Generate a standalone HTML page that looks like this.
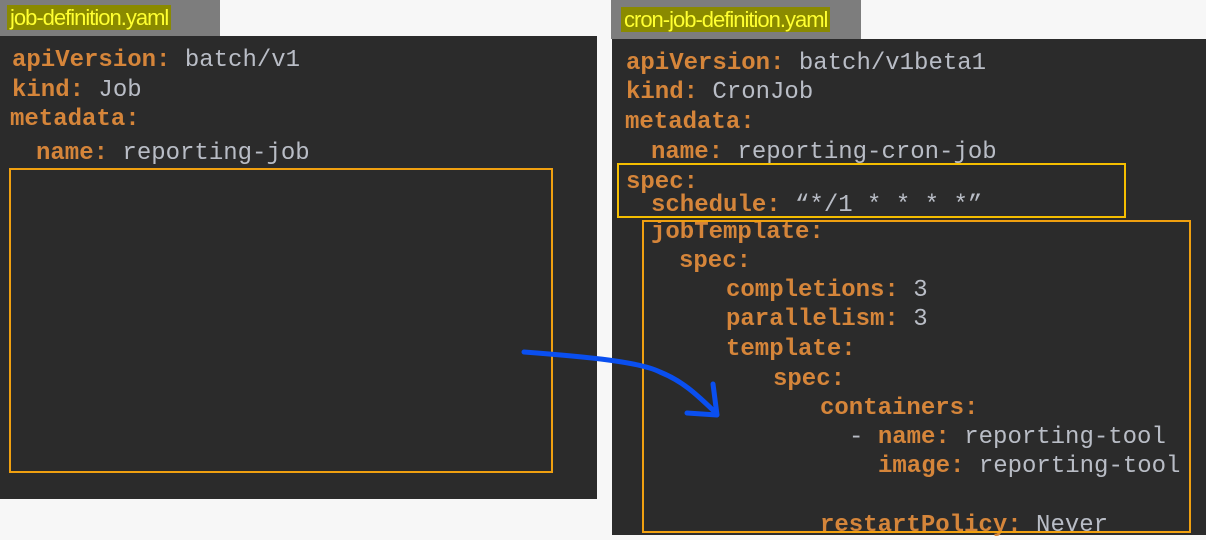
<!DOCTYPE html>
<html><head><meta charset="utf-8"><style>
body{margin:0;width:1206px;height:535px;background:#f7f7f7;position:relative;overflow:hidden;font-family:"Liberation Mono",monospace;font-size:24px}
.p{position:absolute;background:#2b2b2b}
.tab{position:absolute;background:#7d7d7d;font-family:"Liberation Sans",sans-serif;font-size:22px;color:#f4f400}
.tab span{background:#8a8a00;padding:0 3px;color:#ffff30;letter-spacing:-1px}
.l{position:absolute;white-space:pre;line-height:28px;color:#b9bdc6}
.k{color:#d5853a;font-weight:bold}
.box{position:absolute;box-sizing:border-box}
</style></head><body>
<div class="tab" style="left:0;top:0;width:220px;height:36px;line-height:36px"><span style="margin-left:7px">job-definition.yaml</span></div>
<div class="p" style="left:0;top:36px;width:597px;height:463px"></div>
<div class="tab" style="left:611px;top:0;width:250px;height:39px;line-height:39px"><span style="margin-left:10px">cron-job-definition.yaml</span></div>
<div class="p" style="left:612px;top:39px;width:594px;height:496px"></div>

<div class="l" style="left:12px;top:47px"><span class="k">apiVersion:</span> batch/v1</div>
<div class="l" style="left:12px;top:77px"><span class="k">kind:</span> Job</div>
<div class="l" style="left:10px;top:106px"><span class="k">metadata:</span></div>
<div class="l" style="left:36px;top:140px"><span class="k">name:</span> reporting-job</div>
<div class="box" style="left:9px;top:168px;width:544px;height:305px;border:2px solid #f0a010"></div>

<div class="l" style="left:626px;top:50px"><span class="k">apiVersion:</span> batch/v1beta1</div>
<div class="l" style="left:626px;top:79px"><span class="k">kind:</span> CronJob</div>
<div class="l" style="left:625px;top:109px"><span class="k">metadata:</span></div>
<div class="l" style="left:651px;top:139px"><span class="k">name:</span> reporting-cron-job</div>
<div class="l" style="left:626px;top:169px"><span class="k">spec:</span></div>
<div class="l" style="left:651px;top:192px"><span class="k">schedule:</span> “*/1 * * * *”</div>
<div class="l" style="left:651px;top:219px"><span class="k">jobTemplate:</span></div>
<div class="l" style="left:679px;top:248px"><span class="k">spec:</span></div>
<div class="l" style="left:726px;top:277px"><span class="k">completions:</span> 3</div>
<div class="l" style="left:726px;top:306px"><span class="k">parallelism:</span> 3</div>
<div class="l" style="left:726px;top:336px"><span class="k">template:</span></div>
<div class="l" style="left:773px;top:366px"><span class="k">spec:</span></div>
<div class="l" style="left:820px;top:395px"><span class="k">containers:</span></div>
<div class="l" style="left:849px;top:424px">- <span class="k">name:</span> reporting-tool</div>
<div class="l" style="left:878px;top:453px"><span class="k">image:</span> reporting-tool</div>
<div class="l" style="left:820px;top:512px"><span class="k">restartPolicy:</span> Never</div>
<div class="box" style="left:617px;top:163px;width:509px;height:55px;border:2px solid #f5be00"></div>
<div class="box" style="left:642px;top:220px;width:549px;height:313px;border:2px solid #f0a010"></div>

<svg style="position:absolute;left:0;top:0" width="1206" height="535">
<path d="M524 352 C590 357 640 362 660 372 C685 382 700 398 716 413" fill="none" stroke="#0a4ff0" stroke-width="5" stroke-linecap="round"/>
<path d="M713 384 L717 415 L687 413" fill="none" stroke="#0a4ff0" stroke-width="5" stroke-linecap="round" stroke-linejoin="round"/>
</svg>
</body></html>
